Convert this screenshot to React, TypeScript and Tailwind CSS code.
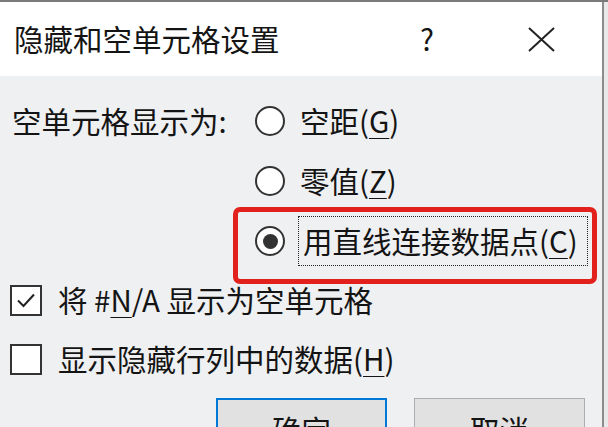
const font = { fontFamily: '"Microsoft YaHei", "Noto Sans CJK SC", "Noto Sans", sans-serif' };

function Radio({ checked }: { checked?: boolean }) {
  return (
    <span className="flex h-[30px] w-[30px] shrink-0 items-center justify-center rounded-full border-2 border-[#333] bg-white">
      {checked && <span className="h-[15px] w-[15px] rounded-full bg-[#333]" />}
    </span>
  );
}

function Checkbox({ checked }: { checked?: boolean }) {
  return (
    <span className="flex h-[31px] w-[32px] shrink-0 items-center justify-center border-2 border-[#333] bg-white">
      {checked && (
        <svg width="20" height="16" viewBox="0 0 20 16" fill="none">
          <path d="M2 8.5 L7.5 14 L18 2.5" stroke="#222" strokeWidth="2" />
        </svg>
      )}
    </span>
  );
}

function U({ children }: { children: string }) {
  return <span className="underline decoration-1 underline-offset-[5px]">{children}</span>;
}

export default function App() {
  return (
    <div
      className="relative h-[427px] w-[608px] overflow-hidden border-t-2 border-[#7a7a7a] bg-[#e9e9e9] text-[#141414]"
      style={font}
    >
      <div className="mr-[4px] h-full border-r-2 border-[#8c8c8c] bg-[#eff0f1]">
        <div className="flex h-[74px] items-center bg-white text-[29.5px] leading-none">
          <span className="w-[420px] pl-[14px]">隐藏和空单元格设置</span>
          <span className="w-[108px]">?</span>
          <svg width="27" height="25" viewBox="0 0 27 25" fill="none">
            <path d="M1 1 L26 24 M26 1 L1 24" stroke="#222" strokeWidth="2" />
          </svg>
        </div>

        <div className="pt-[15px] text-[29.5px] leading-none">
          <div className="flex">
            <div className="flex h-[60px] w-[255px] items-center pl-[12px]">空单元格显示为:</div>
            <div className="flex flex-col">
              <div className="flex h-[60px] items-center gap-[15px]">
                <Radio />
                <span>空距(<U>G</U>)</span>
              </div>
              <div className="flex h-[60px] items-center gap-[15px]">
                <Radio />
                <span>零值(<U>Z</U>)</span>
              </div>
              <div className="flex h-[60px] items-center gap-[13px]">
                <Radio checked />
                <span className="flex h-[50px] w-[290px] items-center border border-dotted border-[#222] pl-[4px]">
                  用直线连接数据点(<U>C</U>)
                </span>
              </div>
            </div>
          </div>

          <div className="flex h-[58px] items-center gap-[16px] pl-[10px]">
            <Checkbox checked />
            <span>
              将 #<U>N</U>/A 显示为空单元格
            </span>
          </div>
          <div className="flex h-[60px] items-center gap-[16px] pl-[10px]">
            <Checkbox />
            <span>
              显示隐藏行列中的数据(<U>H</U>)
            </span>
          </div>

          <div className="mt-[9px] flex gap-[27px] pl-[216px]">
            <button className="flex h-[56px] w-[171px] justify-center border-2 border-[#0078d7] bg-[#e1e1e1] pt-[15px] leading-none">
              确定
            </button>
            <button className="flex h-[56px] w-[171px] justify-center border border-[#adadad] bg-[#e1e1e1] pt-[16px] leading-none">
              取消
            </button>
          </div>
        </div>
      </div>

      <div className="absolute left-[233px] top-[205px] h-[77px] w-[364px] rounded-[7px] border-[5px] border-[#e3211c]" />
    </div>
  );
}
